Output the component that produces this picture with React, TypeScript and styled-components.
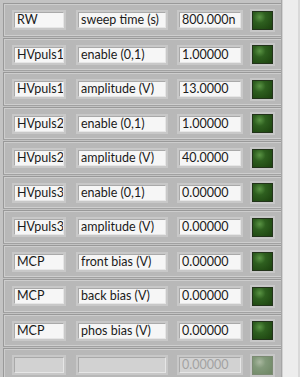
import React from "react";
import styled, { createGlobalStyle } from "styled-components";

const Global = createGlobalStyle`
  html, body { margin: 0; padding: 0; background: #c3c3c3; }
  body { width: 300px; height: 377px; overflow: hidden; font-family: Lato, "Noto Sans", sans-serif; }
`;

const Frame = styled.div`
  display: flex;
  width: 300px;
  height: 377px;
  overflow: hidden;
  background: #c3c3c3;
`;

const List = styled.div`
  width: 282px;
  padding-left: 3px;
  padding-top: 3px;
  box-sizing: border-box;
  display: flex;
  flex-direction: column;
  border-right: 1px solid #a6a6a6;
`;

const Scroll = styled.div`
  flex: 1;
  background: #ededed;
  border-left: 1px solid #d2d2d2;
  border-right: 2px solid #d9d9d9;
`;

const Row = styled.div<{ $h: number }>`
  flex: none;
  height: ${(p) => p.$h}px;
  box-sizing: border-box;
  display: flex;
  align-items: center;
  padding-left: 8px;
  background: #b8b8b8;
  border-top: 1px solid #999999;
  border-left: 1px solid #999999;
  border-bottom: 1px solid #a1a1a1;
  box-shadow: inset 1px 1px 0 #cdcdcd, inset 0 -1px 0 #cecece;
  margin-bottom: 1px;
`;

const Field = styled.div<{ $w: number; $ml: number; $dim?: boolean }>`
  flex: none;
  width: ${(p) => p.$w}px;
  height: 16px;
  margin-left: ${(p) => p.$ml}px;
  box-sizing: border-box;
  background: ${(p) => (p.$dim ? "#d2d2d2" : "#f6f6f6")};
  border-top: 1px solid #a9a9a9;
  border-left: 1px solid #a9a9a9;
  border-right: 1px solid #e6e6e6;
  border-bottom: 1px solid #e6e6e6;
  box-shadow: 0 0 0 2px #c8c8c8;
  color: ${(p) => (p.$dim ? "#a2a2a2" : "#1a1a1a")};
  font-size: 12.5px;
  line-height: 14px;
  padding-left: 2px;
  white-space: nowrap;
  overflow: hidden;
`;

const Led = styled.div<{ $dim?: boolean }>`
  flex: none;
  width: 21px;
  height: 19px;
  margin-left: 11px;
  box-sizing: border-box;
  border: 1px solid ${(p) => (p.$dim ? "#7b8a72" : "#22331a")};
  box-shadow: 0 0 0 2px #c7c7c7;
  background: ${(p) =>
    p.$dim
      ? "radial-gradient(circle at 35% 30%, #aab8a0 0%, #82997a 35%, #6d8563 100%)"
      : "radial-gradient(circle at 35% 30%, #5a9444 0%, #2e5f1f 35%, #1b400e 100%)"};
`;

type R = { a: string; b: string; c: string; dim?: boolean };

const rows: R[] = [
  { a: "RW", b: "sweep time (s)", c: "800.000n" },
  { a: "HVpuls1", b: "enable (0,1)", c: "1.00000" },
  { a: "HVpuls1", b: "amplitude (V)", c: "13.0000" },
  { a: "HVpuls2", b: "enable (0,1)", c: "1.00000" },
  { a: "HVpuls2", b: "amplitude (V)", c: "40.0000" },
  { a: "HVpuls3", b: "enable (0,1)", c: "0.00000" },
  { a: "HVpuls3", b: "amplitude (V)", c: "0.00000" },
  { a: "MCP", b: "front bias (V)", c: "0.00000" },
  { a: "MCP", b: "back bias (V)", c: "0.00000" },
  { a: "MCP", b: "phos bias (V)", c: "0.00000" },
  { a: "", b: "", c: "0.00000", dim: true },
];

export default function App() {
  return (
    <>
      <Global />
      <Frame>
        <List>
          {rows.map((r, i) => (
            <Row key={i} $h={i % 2 === 0 ? 34 : 33}>
              <Field $w={50} $ml={2} $dim={r.dim}>{r.a}</Field>
              <Field $w={88} $ml={14} $dim={r.dim}>{r.b}</Field>
              <Field $w={62} $ml={13} $dim={r.dim}>{r.c}</Field>
              <Led $dim={r.dim} />
            </Row>
          ))}
        </List>
        <Scroll />
      </Frame>
    </>
  );
}
